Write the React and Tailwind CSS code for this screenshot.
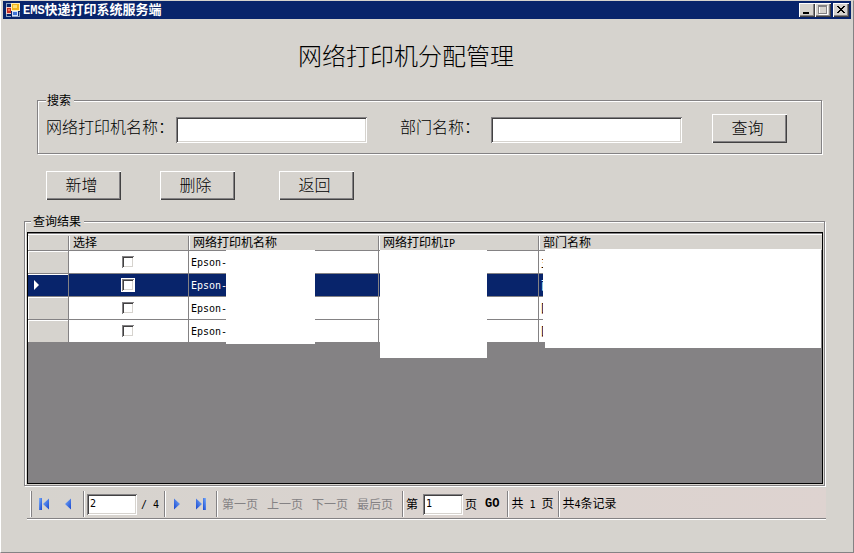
import React from 'react';

const bevel =
  'bg-[#d6d3ce] shadow-[inset_1px_1px_0_#ffffff,inset_-1px_-1px_0_#424142,inset_-2px_-2px_0_#848284]';
const sunken =
  'rounded-none bg-white outline-none shadow-[inset_1px_1px_0_#848284,inset_-1px_-1px_0_#ffffff,inset_2px_2px_0_#424142,inset_-2px_-2px_0_#d6d3ce]';
const etched =
  'border border-[#848284] shadow-[1px_1px_0_#ffffff,inset_1px_1px_0_#ffffff]';

function Mono({ children }) {
  return <span className="font-['DejaVu_Sans_Mono',monospace] text-[10px]">{children}</span>;
}

function PushButton({ children }) {
  return (
    <button type="button" className={`h-[29px] w-[75px] pb-[3px] pr-1 text-base font-light leading-4 ${bevel}`}>
      {children}
    </button>
  );
}

function CaptionButton({ label, className = '', children }) {
  return (
    <button
      type="button"
      aria-label={label}
      className={`flex h-[14px] w-4 items-center justify-center ${bevel} ${className}`}
    >
      <svg width="16" height="14" shapeRendering="crispEdges">{children}</svg>
    </button>
  );
}

function AppIcon() {
  return (
    <svg width="14" height="14" viewBox="0 0 14 14" shapeRendering="crispEdges" aria-hidden="true">
      <path d="M0 0h5v3H0zM0 10h5v4H0zM12 10h2v4h-2z" fill="#08246b" />
      <path d="M0 0h5v1H1v3H0zM0 10h1v3h4v1H0zM13 9h1v5H6v-1h7z" fill="#8fa5c8" />
      <rect x="0" y="4" width="5" height="7" fill="#f3cfc4" />
      <rect x="1" y="5" width="4" height="5" fill="#c92d24" />
      <rect x="2" y="6" width="2" height="2" fill="#f07a55" />
      <rect x="5" y="0" width="9" height="8" fill="#fff0b8" />
      <rect x="6" y="1" width="7" height="6" fill="#f2b51d" />
      <rect x="7" y="2" width="4" height="3" fill="#ffe071" />
      <rect x="6" y="8" width="6" height="5" fill="#d5e3fb" />
      <rect x="7" y="9" width="4" height="3" fill="#3f74d8" />
    </svg>
  );
}

function NavIcon({ flip = false, bar = false }) {
  const id = `blue${flip ? 'R' : 'L'}${bar ? 'B' : ''}`;
  return (
    <svg width="12" height="12" viewBox="0 0 12 12" aria-hidden="true" className={flip ? '-scale-x-100' : ''}>
      <defs>
        <linearGradient id={id} x1="0" y1="0" x2="1" y2="1">
          <stop offset="0" stopColor="#7db1fb" />
          <stop offset="1" stopColor="#1745cf" />
        </linearGradient>
      </defs>
      {bar && <rect x="1" y="0" width="3" height="12" fill={`url(#${id})`} />}
      <path d={bar ? 'M11 .5v11L5 6z' : 'M9 .5v11L3 6z'} fill={`url(#${id})`} />
    </svg>
  );
}

function Separator() {
  return <span className="h-[26px] w-[2px] shrink-0 border-l border-r border-l-[#848284] border-r-white" />;
}

function HeaderCell({ last = false, children }) {
  return (
    <th
      scope="col"
      className="h-[18px] border-b border-[#848284] bg-[#d6d3ce] p-0 text-left font-normal leading-3 shadow-[inset_0_1px_0_#848284,inset_0_2px_0_#ffffff]"
    >
      <span className="mt-[3px] flex h-[14px] items-start border-l border-white pl-[3px]">
        <span className="flex-1 whitespace-nowrap">{children}</span>
        {!last && <span className="h-[14px] w-px bg-[#848284]" />}
      </span>
    </th>
  );
}

const rows = [
  { name: 'Epson-', dept: '主' },
  { name: 'Epson-', dept: '面', selected: true },
  { name: 'Epson-', dept: '国' },
  { name: 'Epson-', dept: '国' },
];

function GridRow({ row, index }) {
  const cell = `h-[23px] border-b border-r border-[#848284] p-0 leading-3 ${
    row.selected ? 'bg-[#08246b] text-white' : 'bg-white'
  }`;
  return (
    <tr>
      <th
        scope="row"
        className={`h-[23px] border-b border-r border-[#848284] p-0 ${
          row.selected
            ? 'bg-[#08246b] shadow-[inset_0_1px_0_#ffffff]'
            : 'bg-[#d6d3ce] shadow-[inset_1px_1px_0_#ffffff]'
        }`}
      >
        {row.selected && (
          <svg width="6" height="10" viewBox="0 0 6 10" className="ml-[6px]" aria-label="当前行">
            <path d="M0 0l5 5-5 5z" fill="#fff" />
          </svg>
        )}
      </th>
      <td className={`${cell} pr-[2px]`}>
        <input
          type="checkbox"
          aria-label={`选择第${index + 1}行`}
          className={`mx-auto block size-3 appearance-none ${sunken} ${row.selected ? 'ring-1 ring-white' : ''}`}
        />
      </td>
      <td className={`${cell} pl-[2px]`}>
        <Mono>{row.name}</Mono>
      </td>
      <td className={cell} />
      <td className={`${cell} pl-[2px]`}>{row.dept}</td>
    </tr>
  );
}

export default function App() {
  return (
    <main
      lang="zh-CN"
      className="flex min-h-screen w-full flex-col border-b border-l border-r border-t border-b-[#848284] border-l-white border-r-[#848284] border-t-[#d6d3ce] bg-[#d6d3ce] font-['Noto_Sans_CJK_SC',sans-serif] text-xs leading-3 text-black"
    >
      <header className="mx-[2px] flex h-[18px] items-center bg-[#08246b] pl-[3px] pr-[2px] text-white">
        <AppIcon />
        <h1 className="ml-[3px] flex-1 whitespace-nowrap text-[13px] font-bold leading-4">
          <span className="font-['Liberation_Mono',monospace] text-xs">EMS</span>快递打印系统服务端
        </h1>
        <CaptionButton label="最小化">
          <rect x="4" y="9" width="6" height="2" fill="#000" />
        </CaptionButton>
        <CaptionButton label="最大化">
          <path d="M4.5 3.5h8v8h-8z" fill="none" stroke="#fff" />
          <path d="M3.5 2.5h8v8h-8zM3 3.5h9" fill="none" stroke="#848284" />
        </CaptionButton>
        <CaptionButton label="关闭" className="ml-[2px]">
          <path
            d="M4 3h2v1h1v1h2V4h1V3h2v1h-1v1h-1v1H9v1h1v1h1v1h1v1h-2V9H9V8H7v1H6v1H4V9h1V8h1V7h1V6H6V5H5V4H4z"
            fill="#000"
          />
        </CaptionButton>
      </header>

      <h2 className="mt-6 pl-[297px] text-2xl font-light leading-6">网络打印机分配管理</h2>

      <fieldset className={`ml-9 mr-[31px] mt-[27px] px-2 pb-[10px] ${etched}`}>
        <legend className="bg-[#d6d3ce] pl-px pr-[3px]">搜索</legend>
        <div className="flex items-start pt-2">
          <label htmlFor="printer" className="w-[130px] whitespace-nowrap text-base font-light leading-6">
            网络打印机名称：
          </label>
          <input id="printer" type="text" className={`mt-[3px] h-[26px] w-[191px] px-1 ${sunken}`} />
          <label htmlFor="dept" className="ml-[33px] w-[91px] whitespace-nowrap text-base font-light leading-6">
            部门名称：
          </label>
          <input id="dept" type="text" className={`mr-[30px] mt-[3px] h-[26px] w-[191px] px-1 ${sunken}`} />
          <PushButton>查询</PushButton>
        </div>
      </fieldset>

      <div className="ml-[45px] mt-[17px] flex">
        <PushButton>新增</PushButton>
        <span className="w-[39px]" />
        <PushButton>删除</PushButton>
        <span className="w-[44px]" />
        <PushButton>返回</PushButton>
      </div>

      <fieldset className={`ml-[23px] mr-7 mt-[15px] min-w-0 pb-px pl-[2px] pr-px ${etched}`}>
        <legend className="ml-1 bg-[#d6d3ce] pl-[2px] pr-[3px]">查询结果</legend>
        <div className="relative mt-[5px] min-h-[252px] border border-black bg-[#848284]">
          <table className="w-full table-fixed border-separate border-spacing-0">
            <colgroup>
              <col className="w-[41px]" />
              <col className="w-[120px]" />
              <col className="w-[190px]" />
              <col className="w-[160px]" />
              <col />
            </colgroup>
            <thead>
              <tr>
                <HeaderCell />
                <HeaderCell>选择</HeaderCell>
                <HeaderCell>网络打印机名称</HeaderCell>
                <HeaderCell>
                  网络打印机<Mono>IP</Mono>
                </HeaderCell>
                <HeaderCell last>部门名称</HeaderCell>
              </tr>
            </thead>
            <tbody>
              {rows.map((row, i) => (
                <GridRow key={i} row={row} index={i} />
              ))}
            </tbody>
          </table>
          <div className="absolute left-[198px] top-[17px] h-[94px] w-[89px] bg-white" />
          <div className="absolute left-[352px] top-[17px] h-[108px] w-[107px] bg-white" />
          <div className="absolute left-[515px] right-px top-[18px] h-[91px] bg-white" />
          <div className="absolute left-[517px] right-px top-4 h-[99px] bg-white" />
        </div>
      </fieldset>

      <nav
        aria-label="分页"
        className="ml-[26px] mr-[27px] mt-[2px] flex h-[31px] items-center whitespace-nowrap border-b border-[#848284] bg-linear-to-r from-[#d6d3ce] to-[#ded3d0] pt-[2px] shadow-[0_1px_0_#ffffff]"
      >
        <span className="ml-[3px] h-[26px] w-[2px] border-l border-r border-l-white border-r-[#848284]" />
        <button type="button" aria-label="首页" className="ml-[6px]"><NavIcon bar /></button>
        <button type="button" aria-label="上一页" className="ml-3 mr-[9px]"><NavIcon /></button>
        <Separator />
        <input
          type="text"
          aria-label="当前页"
          defaultValue="2"
          className={`ml-[2px] mr-1 h-[21px] w-[50px] pb-[2px] pl-[3px] font-['DejaVu_Sans_Mono',monospace] text-[10px] ${sunken}`}
        />
        <span className="w-[23px]"><Mono>/ 4</Mono></span>
        <Separator />
        <button type="button" aria-label="后一页" className="ml-[5px]"><NavIcon flip /></button>
        <button type="button" aria-label="末页" className="ml-3 mr-[9px]"><NavIcon flip bar /></button>
        <Separator />
        <div className="ml-1 mr-[9px] flex gap-[9px] text-[#848284]">
          <button type="button" disabled>第一页</button>
          <button type="button" disabled>上一页</button>
          <button type="button" disabled>下一页</button>
          <button type="button" disabled>最后页</button>
        </div>
        <Separator />
        <label htmlFor="goto" className="ml-[2px] w-[17px]">第</label>
        <input
          id="goto"
          type="text"
          defaultValue="1"
          className={`mr-[2px] h-[21px] w-10 pb-[2px] pl-[3px] font-['DejaVu_Sans_Mono',monospace] text-[10px] ${sunken}`}
        />
        <span>页</span>
        <button type="button" className="ml-2 mr-2 font-['Liberation_Mono',monospace] text-xs font-bold leading-3">
          GO
        </button>
        <Separator />
        <span className="ml-[2px] w-[47px]">
          共<Mono> 1 </Mono>页
        </span>
        <Separator />
        <span className="ml-[2px]">
          共<Mono>4</Mono>条记录
        </span>
      </nav>
    </main>
  );
}
